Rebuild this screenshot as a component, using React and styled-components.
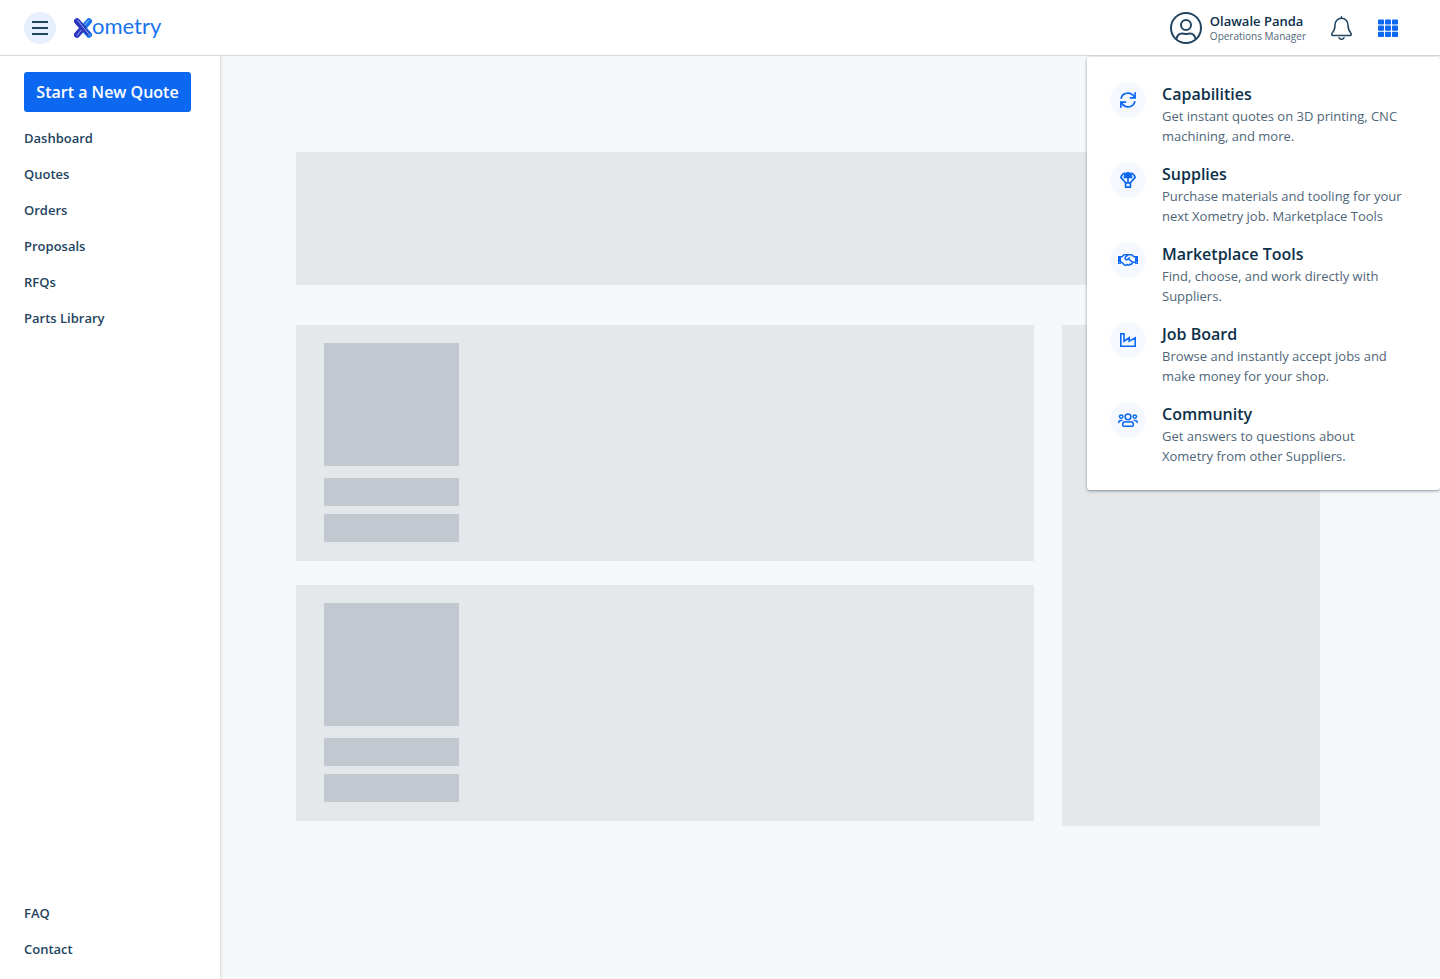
import React, { useState } from 'react';
import styled, { createGlobalStyle } from 'styled-components';
import { FaRegHandshake } from 'react-icons/fa';

const GlobalStyle = createGlobalStyle`
  :root {
    --primary-color: #0d68f1;
    --heading-color: #0c2f4a;
    --text-color: #23445f;
    --muted-color: #4f6678;
    --border-color: #d5dade;
  }

  * {
    box-sizing: border-box;
  }

  body {
    margin: 0;
    background-color: #f6f7f9;
    color: var(--text-color);
    font-family: 'Open Sans', 'Noto Sans', sans-serif;
  }

  a {
    color: inherit;
    text-decoration: none;
  }

  button {
    font-family: inherit;
    border: none;
    cursor: pointer;
  }
`;

const Page = styled.div`
  min-height: 100vh;
  display: flex;
  flex-direction: column;
`;

const Header = styled.header`
  position: relative;
  z-index: 10;
  display: flex;
  align-items: center;
  justify-content: space-between;
  height: 56px;
  padding: 0 42px 0 24px;
  background-color: white;
  border-bottom: 1px solid var(--border-color);
`;

const HeaderGroup = styled.div`
  display: flex;
  align-items: center;
  gap: ${({ $gap }) => $gap}px;
`;

const MenuToggle = styled.button`
  display: flex;
  align-items: center;
  justify-content: center;
  width: 32px;
  height: 32px;
  padding: 0;
  border-radius: 50%;
  background-color: #e6effc;
`;

const Logo = styled.a`
  display: flex;
  align-items: flex-start;
  color: #1a74ee;
  font-family: Lato, sans-serif;
  font-size: 22px;
  line-height: 16px;
`;

const UserLink = styled.a`
  display: flex;
  align-items: center;
  gap: 8px;
`;

const UserName = styled.div`
  color: var(--heading-color);
  font-size: 13px;
  font-weight: 600;
  line-height: 16px;
`;

const UserRole = styled.div`
  color: var(--muted-color);
  font-size: 10px;
  line-height: 14px;
`;

const IconButton = styled.button`
  display: flex;
  padding: 0;
  background: none;
`;

const Body = styled.div`
  flex: 1;
  display: flex;
`;

const Sidebar = styled.aside`
  flex: none;
  width: 221px;
  display: flex;
  flex-direction: column;
  justify-content: space-between;
  padding: 16px 24px 12px;
  background-color: white;
  border-right: 1px solid #dfe3e6;
  box-shadow: 1px 0 2px rgba(12, 47, 74, 0.06);
`;

const QuoteButton = styled.button`
  width: 167px;
  height: 40px;
  margin-bottom: 8px;
  padding: 0;
  border-radius: 3px;
  background-color: var(--primary-color);
  color: white;
  font-size: 16px;
  font-weight: 600;
  white-space: nowrap;
`;

const NavList = styled.ul`
  margin: 0;
  padding: 0;
  list-style: none;
`;

const NavLink = styled.a`
  display: block;
  font-size: 13px;
  font-weight: 600;
  line-height: 36px;
`;

const Main = styled.main`
  flex: 1;
  padding: 96px 120px 96px 75px;
`;

const Block = styled.div`
  background-color: #e5e8ea;
`;

const Banner = styled(Block)`
  height: 133px;
  margin-bottom: 40px;
`;

const Columns = styled.div`
  display: grid;
  grid-template-columns: 1fr 258px;
  align-items: start;
  gap: 28px;
`;

const CardList = styled.div`
  display: flex;
  flex-direction: column;
  gap: 24px;
`;

const Card = styled(Block)`
  display: flex;
  flex-direction: column;
  gap: 8px;
  padding: 18px 28px 19px;
`;

const Thumb = styled.div`
  width: 135px;
  height: 123px;
  margin-bottom: 4px;
  background-color: #c1c8cf;
`;

const Line = styled.div`
  width: 135px;
  height: 28px;
  background-color: #c1c8cf;
`;

const Aside = styled(Block)`
  height: 501px;
`;

const AppsMenu = styled.nav`
  position: absolute;
  top: 57px;
  right: 0;
  width: 353px;
  display: flex;
  flex-direction: column;
  gap: 16px;
  padding: 25px 36px 24px 23px;
  background-color: white;
  border-radius: 3px;
  box-shadow: 0 1px 3px rgba(12, 47, 74, 0.5);
`;

const AppLink = styled.a`
  display: flex;
  align-items: flex-start;
  gap: 16px;
`;

const AppIcon = styled.span`
  flex: none;
  display: flex;
  align-items: center;
  justify-content: center;
  width: 36px;
  height: 36px;
  border-radius: 50%;
  background-color: #f5f9ff;
  color: var(--primary-color);
`;

const AppTitle = styled.div`
  color: var(--heading-color);
  font-size: 16px;
  font-weight: 600;
  line-height: 24px;
`;

const AppText = styled.div`
  color: var(--muted-color);
  font-size: 13px;
  line-height: 20px;
`;

const LogoMark = () => (
  <svg width="18" height="20" viewBox="0 0 18 20" fill="none" aria-hidden="true">
    <path d="M15 3.2L9 10L15 16.8" stroke="#1a74ee" strokeWidth="6" strokeLinecap="round" strokeLinejoin="round" />
    <path d="M3 3.2L9 10L3 16.8" stroke="#2b35bd" strokeWidth="6" strokeLinecap="round" strokeLinejoin="round" />
    <path d="M9.4 9.8L14 15.6" stroke="#2b35bd" strokeWidth="3.4" strokeLinecap="round" />
    <path d="M3.4 2L16 17.6M14.8 2L10.8 7.2M7.4 11.8L3 17.6" stroke="#b9d2fa" strokeWidth="0.8" />
  </svg>
);

const BarsIcon = () => (
  <svg width="16" height="14" viewBox="0 0 16 14" stroke="#23445f" strokeWidth="2" aria-hidden="true">
    <path d="M0 1H16M0 7H16M0 13H16" />
  </svg>
);

const AvatarIcon = () => (
  <svg width="32" height="32" viewBox="0 0 32 32" fill="none" stroke="#23445f" strokeWidth="2" aria-hidden="true">
    <circle cx="16" cy="16" r="15" />
    <circle cx="16" cy="13" r="5" />
    <path d="M6.4 27.2C7 23.6 9.2 21.4 12 21.4C13.6 21.4 14.4 22 16 22C17.6 22 18.4 21.4 20 21.4C22.8 21.4 25 23.6 25.6 27.2" />
  </svg>
);

const BellIcon = () => (
  <svg width="24" height="26" viewBox="0 0 24 26" fill="none" stroke="#23445f" strokeWidth="1.5" strokeLinecap="round" strokeLinejoin="round" aria-hidden="true">
    <path d="M11.5 1.8V3.2" />
    <path d="M11.5 3.2C7.6 3.2 5 6.2 5 10C5 15 3.5 16.6 2.2 18C1.2 19.1 1.8 20.4 3 20.4H20C21.2 20.4 21.8 19.1 20.8 18C19.5 16.6 18 15 18 10C18 6.2 15.4 3.2 11.5 3.2Z" />
    <path d="M9 22.8C9.4 23.9 10.4 24.3 11.5 24.3C12.6 24.3 13.6 23.9 14 22.8" />
  </svg>
);

const GridIcon = () => (
  <svg width="20" height="18" viewBox="0 0 20 18" fill="#0d68f1" aria-hidden="true">
    {[0.4, 6.6, 12.8].map((y) =>
      [0, 7, 14].map((x) => <rect key={`${x}-${y}`} x={x} y={y} width="6" height="5.2" rx="0.8" />)
    )}
  </svg>
);

const SyncIcon = () => (
  <svg width="16" height="16" viewBox="0 0 16 16" fill="none" stroke="currentColor" strokeWidth="1.7" aria-hidden="true">
    <path d="M1 6.8C1.7 3.4 4.6 1.1 8 1.1C10.8 1.1 13 2.6 14.6 5.2" />
    <path d="M15.1 0.3V5.8H9.8" />
    <path d="M15 9.2C14.3 12.6 11.4 14.9 8 14.9C5.2 14.9 3 13.4 1.4 10.8" />
    <path d="M0.9 15.7V10.2H6.2" />
  </svg>
);

const ParachuteIcon = () => (
  <svg width="16" height="16" viewBox="0 0 16 16" fill="none" stroke="currentColor" strokeWidth="1.7" aria-hidden="true">
    <path d="M3.6 6.2C3.6 2.4 5.4 0 8 0C10.6 0 12.4 2.4 12.4 6.2Z" fill="currentColor" stroke="none" />
    <path d="M5.2 1C2.8 1.8 1.3 3.4 0.9 5.4L5.6 10.8M10.8 1C13.2 1.8 14.7 3.4 15.1 5.4L10.4 10.8" />
    <path d="M8 5.6V10.4" />
    <path d="M5.6 10.8H10.4V15.1H5.6Z" />
  </svg>
);

const FactoryIcon = () => (
  <svg width="16" height="14" viewBox="0 0 16 14" fill="none" stroke="currentColor" strokeWidth="1.6" aria-hidden="true">
    <path d="M0.8 13.2V0.8H4V8.2L9.2 4.8V8.2L15.2 4.8V13.2Z" />
  </svg>
);

const UsersIcon = () => (
  <svg width="20" height="14" viewBox="0 0 20 14" fill="none" stroke="currentColor" strokeWidth="1.5" strokeLinecap="round" aria-hidden="true">
    <circle cx="10" cy="3.8" r="2.9" />
    <circle cx="3.2" cy="3.6" r="1.7" />
    <circle cx="16.8" cy="3.6" r="1.7" />
    <path d="M4.7 12.2V11.4C4.7 9.8 5.9 8.7 7.4 8.7C8.4 8.7 9 9.1 10 9.1C11 9.1 11.6 8.7 12.6 8.7C14.1 8.7 15.3 9.8 15.3 11.4V12.2C15.3 12.8 14.9 13.2 14.3 13.2H5.7C5.1 13.2 4.7 12.8 4.7 12.2Z" />
    <path d="M0.8 9.4C0.8 8.2 1.6 7.5 2.8 7.5H3.8M19.2 9.4C19.2 8.2 18.4 7.5 17.2 7.5H16.2" />
  </svg>
);

const mainLinks = ['Dashboard', 'Quotes', 'Orders', 'Proposals', 'RFQs', 'Parts Library'];
const footerLinks = ['FAQ', 'Contact'];

const apps = [
  { title: 'Capabilities', text: 'Get instant quotes on 3D printing, CNC machining, and more.', icon: <SyncIcon /> },
  { title: 'Supplies', text: 'Purchase materials and tooling for your next Xometry job. Marketplace Tools', icon: <ParachuteIcon /> },
  { title: 'Marketplace Tools', text: 'Find, choose, and work directly with Suppliers.', icon: <FaRegHandshake size={20} /> },
  { title: 'Job Board', text: 'Browse and instantly accept jobs and make money for your shop.', icon: <FactoryIcon /> },
  { title: 'Community', text: 'Get answers to questions about Xometry from other Suppliers.', icon: <UsersIcon /> },
];

const NavItems = ({ links }) => (
  <NavList>
    {links.map((link) => (
      <li key={link}>
        <NavLink href="#">{link}</NavLink>
      </li>
    ))}
  </NavList>
);

const App = () => {
  const [menuOpen, setMenuOpen] = useState(true);
  const [sidebarOpen, setSidebarOpen] = useState(true);

  return (
    <>
      <GlobalStyle />
      <Page>
        <Header>
          <HeaderGroup $gap={18}>
            <MenuToggle aria-label="Toggle navigation" onClick={() => setSidebarOpen(!sidebarOpen)}>
              <BarsIcon />
            </MenuToggle>
            <Logo href="#" aria-label="Xometry">
              <LogoMark />
              ometry
            </Logo>
          </HeaderGroup>
          <HeaderGroup $gap={24}>
            <UserLink href="#">
              <AvatarIcon />
              <div>
                <UserName>Olawale Panda</UserName>
                <UserRole>Operations Manager</UserRole>
              </div>
            </UserLink>
            <IconButton aria-label="Notifications">
              <BellIcon />
            </IconButton>
            <IconButton aria-label="Apps" aria-expanded={menuOpen} onClick={() => setMenuOpen(!menuOpen)}>
              <GridIcon />
            </IconButton>
          </HeaderGroup>
          {menuOpen && (
            <AppsMenu>
              {apps.map(({ title, text, icon }) => (
                <AppLink href="#" key={title}>
                  <AppIcon>{icon}</AppIcon>
                  <div>
                    <AppTitle>{title}</AppTitle>
                    <AppText>{text}</AppText>
                  </div>
                </AppLink>
              ))}
            </AppsMenu>
          )}
        </Header>
        <Body>
          {sidebarOpen && (
            <Sidebar>
              <div>
                <QuoteButton>Start a New Quote</QuoteButton>
                <NavItems links={mainLinks} />
              </div>
              <NavItems links={footerLinks} />
            </Sidebar>
          )}
          <Main>
            <Banner />
            <Columns>
              <CardList>
                {[1, 2].map((card) => (
                  <Card key={card}>
                    <Thumb />
                    <Line />
                    <Line />
                  </Card>
                ))}
              </CardList>
              <Aside />
            </Columns>
          </Main>
        </Body>
      </Page>
    </>
  );
};

export default App;
